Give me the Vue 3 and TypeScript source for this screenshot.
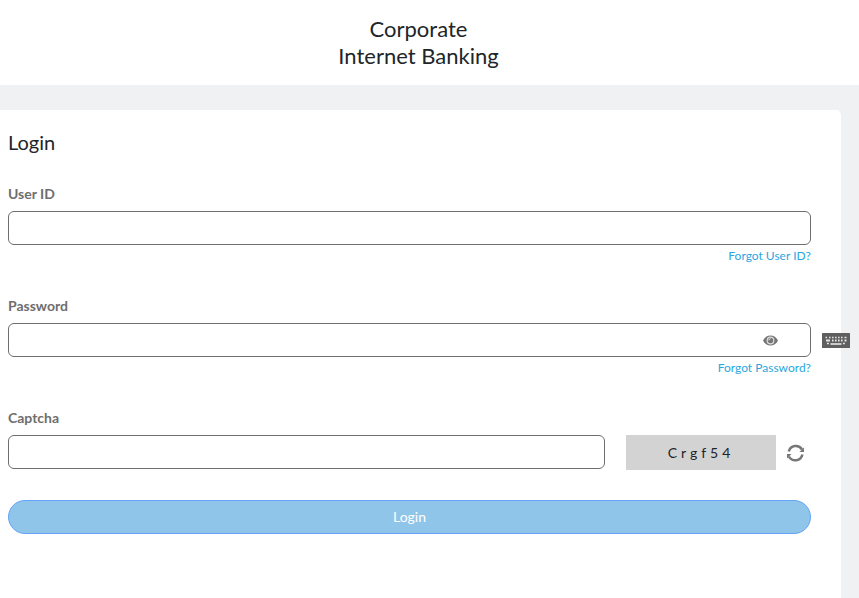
<script setup lang="ts">
import { ref } from 'vue'

const userId = ref('')
const password = ref('')
const captcha = ref('')
const captchaCode = 'Crgf54'
const showPassword = ref(false)
</script>

<template>
  <div class="page">
    <header class="header">
      <h1 class="title">Corporate<br />Internet Banking</h1>
    </header>

    <main class="card">
      <h2 class="heading">Login</h2>
      <form @submit.prevent>
        <div class="group">
          <label class="label" for="user-id">User ID</label>
          <input id="user-id" v-model="userId" class="field" type="text" />
          <a class="link" href="#">Forgot User ID?</a>
        </div>

        <div class="group">
          <label class="label" for="password">Password</label>
          <div class="password">
            <input
              id="password"
              v-model="password"
              class="field"
              :type="showPassword ? 'text' : 'password'"
            />
            <button
              class="icon-button eye"
              type="button"
              aria-label="Show password"
              @click="showPassword = !showPassword"
            >
              <svg width="15" height="11" viewBox="0 0 15 11">
                <path d="M0 5.5C1.6 2.2 4.3.4 7.5.4s5.9 1.8 7.5 5.1c-1.6 3.3-4.3 5.1-7.5 5.1S1.6 8.8 0 5.5z" fill="#757575" />
                <circle cx="7.5" cy="5.5" r="3.3" fill="none" stroke="#ddd" stroke-width="1.2" />
                <path d="M5.8 5.4a1.8 1.8 0 0 1 1.8-1.7" fill="none" stroke="#eee" stroke-width="1" />
              </svg>
            </button>
            <button class="icon-button keyboard" type="button" aria-label="Virtual keyboard">
              <svg width="28" height="15" viewBox="0 0 28 15">
                <rect width="28" height="15" rx="0.5" fill="#5f5f5f" />
                <path d="M3.5 4.5h1.6M7 4.500h1.600M10 4.500h1.600M13 4.500h1.600M16 4.500h1.600M19 4.500h1.600M22.500 4.500h2" stroke="#e4e4e4" stroke-width="1.6" />
                <path d="M4 7.500h4M10 7.500h1.600M13 7.500h1.600M16 7.500h1.600M19 7.500h1.600M22.500 7.500h2" stroke="#e4e4e4" stroke-width="2" />
                <path d="M5 10.500h1.800M8.500 11h11M21 10.500h1.800" stroke="#eee" stroke-width="1.7" />
              </svg>
            </button>
          </div>
          <a class="link" href="#">Forgot Password?</a>
        </div>

        <div class="captcha-group">
          <label class="label" for="captcha">Captcha</label>
          <div class="captcha-row">
            <input id="captcha" v-model="captcha" class="field" type="text" />
            <div class="code">{{ captchaCode }}</div>
            <button class="icon-button refresh" type="button" aria-label="Refresh captcha">
              <svg width="17" height="18" viewBox="0 0 17 18">
                <path d="M1.8 7.5A7.2 7.2 0 0 1 15 5.5M15.400 10.500A7.200 7.200 0 0 1 2 12.500" fill="none" stroke="#777" stroke-width="2.5" />
                <path d="M17 3.500v4.500h-4.500zM0 14.500V10h4.500z" fill="#777" />
              </svg>
            </button>
          </div>
        </div>

        <button class="submit" type="submit">Login</button>
      </form>
    </main>
  </div>
</template>

<style>
body {
  background: #f0f1f3;
}
</style>

<style scoped>
.page {
  box-sizing: border-box;
  display: flex;
  flex-direction: column;
  min-height: 100vh;
  color: #212529;
  font-family: Lato, "Noto Sans", sans-serif;
  font-size: 14px;
}

.header {
  padding: 15px 22px 16px 0;
  background: #fff;
}

.title {
  margin: 0;
  font-size: 22px;
  font-weight: 400;
  line-height: 27px;
  text-align: center;
}

.card {
  flex: 1;
  margin: 25px 18px 0 0;
  padding: 19px 30px 24px 8px;
  background: #fff;
  border-top-right-radius: 5px;
}

.heading {
  margin: 0 0 29px;
  font-size: 20px;
  font-weight: 400;
  line-height: 26px;
}

.group {
  display: flex;
  flex-direction: column;
  height: 112px;
}

.label {
  display: block;
  margin-bottom: 7px;
  color: #6e6e6e;
  font-size: 14px;
  font-weight: 700;
  line-height: 20px;
}

.field {
  box-sizing: border-box;
  width: 100%;
  height: 34px;
  padding: 0 12px;
  border: 1px solid #6e6e6e;
  border-radius: 6px;
  background: #fff;
  font: inherit;
}

.link {
  align-self: flex-end;
  margin-top: 2px;
  color: #2ba6de;
  font-size: 12px;
  line-height: 18px;
  text-decoration: none;
}

.password {
  position: relative;
  display: flex;
}

.icon-button {
  display: flex;
  padding: 0;
  border: 0;
  background: none;
  cursor: pointer;
}

.eye {
  position: absolute;
  top: 12px;
  right: 33px;
}

.keyboard {
  position: absolute;
  top: 10px;
  right: -39px;
}

.captcha-row {
  display: flex;
  align-items: flex-start;
}

.captcha-row .field {
  flex: 1;
  min-width: 0;
}

.code {
  width: 150px;
  margin-left: 21px;
  background: #d3d3d3;
  letter-spacing: 4px;
  line-height: 35px;
  text-align: center;
}

.refresh {
  align-self: center;
  margin: 0 7px 0 11px;
}

.submit {
  display: block;
  width: 100%;
  height: 34px;
  margin-top: 30px;
  padding: 0 0 2px;
  border: 1px solid #66a3f8;
  border-radius: 17px;
  background: #90c5ea;
  color: #fff;
  font: inherit;
}
</style>
